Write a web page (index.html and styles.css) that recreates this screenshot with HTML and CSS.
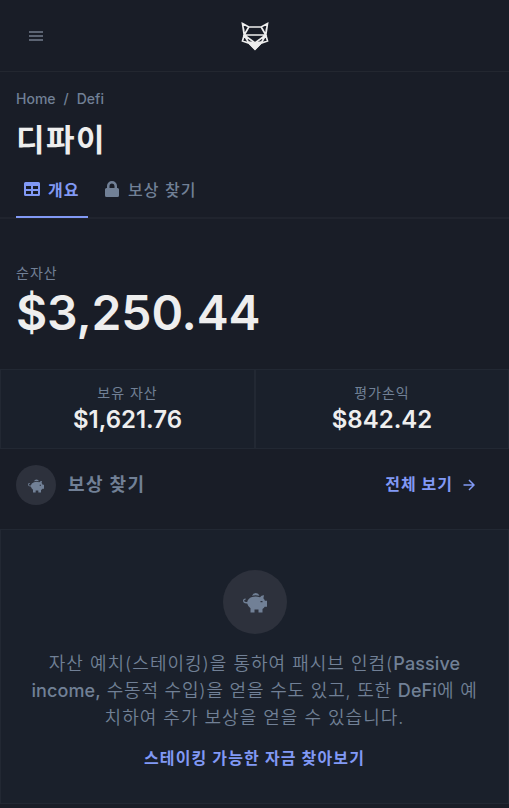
FILE: index.html
```html
<!DOCTYPE html>
<html lang="ko">
<head>
<meta charset="utf-8">
<title>디파이</title>
<link rel="stylesheet" href="styles.css">
</head>
<body>
<svg width="0" height="0" class="defs" aria-hidden="true">
  <symbol id="pig" viewBox="0 0 24 22">
    <path d="M9 4.700a4 4 0 0 1 7.500 0q-4-1-7.500 0z"/>
    <path fill-rule="evenodd" d="M9 6q4-1 8 .2Q18.500 4 21 4.200l-.6 3q1.100 1.100 1.500 2.500H24v6h-2.300q-.8 1.300-2.200 2.200V21.500h-4v-3h-4v3h-4v-4.200Q5 15.500 4.200 12.400q-4.200.3-4.200-2.900Q.2 7.300 2.600 7.400v1.300Q1.200 8.500 1.200 9.700q.1 1.600 3 1.300Q5 7.400 9 6zM17.500 10v1.200h2V10z"/>
  </symbol>
</svg>
<header class="topbar">
  <button class="menu" aria-label="Menu"><svg width="14" height="10" viewBox="0 0 14 10"><path d="M0 0h14v2H0zM0 4h14v2H0zM0 8h14v2H0z"/></svg></button>
  <svg class="logo" width="28" height="30" viewBox="0 0 28 30">
    <path class="lines" d="M1.500 2.500 7.800 6h12.400l6.300-3.500L24.800 14l1.700 6-6.500 2.200-6 6-6-6L1.500 20l1.700-6zM7.800 6 3.200 14h21.600L20.200 6M2.500 7.500 3.200 14l10.800 8 10.800-8 .7-6.500M3.200 14 8 22.200M24.800 14 20 22.200"/>
    <path class="solid" d="M8 20.200 11.500 20.800 14 22l2.500-1.200 3.500-.6.500 2.300L14 29l-6.500-6.500z"/>
  </svg>
</header>
<main>
  <nav class="crumbs"><span>Home</span><span>/</span><span>Defi</span></nav>
  <h1>디파이</h1>
  <nav class="tabs">
    <a class="tab active"><svg width="16" height="14" viewBox="0 0 16 14"><path fill-rule="evenodd" d="M1.500 0h13Q16 0 16 1.500v11q0 1.500-1.500 1.500h-13Q0 14 0 12.500v-11Q0 0 1.500 0zM2 4v3h5V4zM9 4v3h5V4zM2 9v3h5V9zM9 9v3h5V9z"/></svg><span>개요</span></a>
    <a class="tab"><svg width="14" height="16" viewBox="0 0 14 16"><path fill-rule="evenodd" d="M2 7V5a5 5 0 0 1 10 0v2h.5Q14 7 14 8.500v6q0 1.500-1.500 1.500h-11Q0 16 0 14.500v-6Q0 7 1.500 7zM4.500 7h5V5a2.500 2.500 0 0 0-5 0z"/></svg><span>보상 찾기</span></a>
  </nav>
  <section class="worth"><div class="label">순자산</div><div class="total">$3,250.44</div></section>
  <section class="stats">
    <div class="stat"><div class="label">보유 자산</div><div class="value">$1,621.76</div></div>
    <div class="stat"><div class="label">평가손익</div><div class="value">$842.42</div></div>
  </section>
  <section class="rewards">
    <span class="circle"><svg width="16" height="15"><use href="#pig"/></svg></span>
    <h2>보상 찾기</h2>
    <a class="all"><span>전체 보기</span><svg width="12" height="12" viewBox="0 0 12 12"><path d="M.5 6h10.500M6 1l5 5-5 5"/></svg></a>
  </section>
  <section class="empty">
    <span class="circle large"><svg width="24" height="22"><use href="#pig"/></svg></span>
    <p>자산 예치(스테이킹)을 통하여 패시브 인컴(<span class="latin">Passive</span><br><span class="second"><span class="latin">income,</span> 수동적 수입)을 얻을 수도 있고, 또한 <span class="latin">DeFi</span>에 예</span><br>치하여 추가 보상을 얻을 수 있습니다.</p>
    <a class="find">스테이킹 가능한 자금 찾아보기</a>
  </section>
</main>
</body>
</html>
```
FILE: styles.css
```css
* { box-sizing: border-box; }
body { margin: 0; height: 808px; overflow: hidden; background: #191d27; color: #718096; font-family: Inter, "Noto Sans CJK KR", sans-serif; white-space: nowrap; }
h1, h2, p { margin: 0; }
svg { display: block; fill: currentColor; flex: none; }
.defs { position: absolute; }
.topbar { height: 72px; border-bottom: 1px solid #232730; display: grid; grid-template-columns: 1fr 28px 1fr; align-items: center; padding: 0 16px; }
.menu { width: 40px; height: 40px; border: 0; padding: 0 13px; background: none; color: #5c6473; }
.logo { color: #eee; }
.lines { fill: none; stroke: currentColor; stroke-width: 1.700; }
.crumbs { display: flex; gap: 8px; padding: 16px 16px 0; font-size: 14px; line-height: 21px; font-weight: 450; }
h1 { margin: 11px 16px 0; height: 38px; line-height: 40px; font-size: 31px; letter-spacing: 1.500px; font-weight: 700; color: #eee; }
.tabs { display: flex; height: 61px; padding: 0 16px; border-bottom: 2px solid #20242e; }
.tab { display: flex; align-items: center; gap: 9px; height: 60px; padding: 3px 8px 0; font-size: 16px; font-weight: 500; letter-spacing: 1.100px; border-bottom: 2px solid transparent; margin-right: 9px; }
.active { gap: 8px; width: 72px; color: #8199f5; border-color: #8199f5; font-weight: 700; }
.worth { height: 150px; padding: 43px 16px 0; }
.label { font-size: 14px; line-height: 21px; letter-spacing: 1px; font-weight: 400; }
.total { padding-top: 1px; font-size: 48px; line-height: 58px; letter-spacing: -0.150px; font-weight: 600; color: #eee; }
.stats { display: grid; grid-template-columns: 255px 254px; height: 80px; }
.stat { border: 1px solid #222833; background: #1a202b; text-align: center; padding-top: 12px; }
.value { padding-top: 1px; font-size: 24px; line-height: 32px; font-weight: 600; color: #eee; }
.rewards { height: 80px; padding: 16px 34px 24px 16px; display: flex; align-items: center; }
.circle { display: flex; align-items: center; justify-content: center; width: 40px; height: 40px; border-radius: 50%; background: #2d313c; color: #718096; }
h2 { margin-left: 12px; font-size: 18px; line-height: 26px; letter-spacing: 1.400px; font-weight: 700; }
.all { display: flex; align-items: center; gap: 10px; margin-left: auto; color: #8199f5; font-size: 16px; line-height: 22px; letter-spacing: 1px; font-weight: 700; }
.all span { margin-top: -2px; }
.all svg { fill: none; stroke: currentColor; stroke-width: 1.500; }
.empty { height: 275px; border: 1px solid #222833; background: #1a202b; display: flex; flex-direction: column; align-items: center; padding-top: 40px; }
.large { width: 64px; height: 64px; flex: none; }
.empty p { margin-top: 16px; font-size: 18px; line-height: 27px; letter-spacing: 1px; font-weight: 350; text-align: center; }
.second { letter-spacing: 0.800px; }
.latin { font-weight: 450; letter-spacing: 0.100px; }
.find { margin-top: 15px; line-height: 24px; font-size: 16px; letter-spacing: 1.150px; font-weight: 700; color: #8199f5; }
```
